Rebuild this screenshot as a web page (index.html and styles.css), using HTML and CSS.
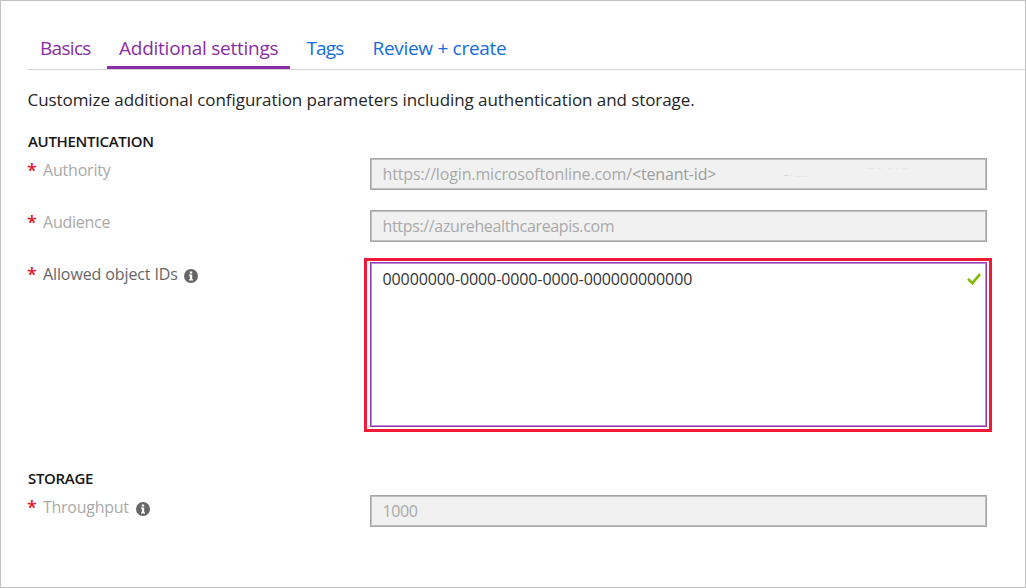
FILE: index.html
```html
<!DOCTYPE html>
<html lang="en">
<head>
<meta charset="utf-8">
<title>Additional settings</title>
<link rel="stylesheet" href="styles.css">
</head>
<body>
<main class="panel">
  <nav class="tabs">
    <a class="tab visited basics">Basics</a>
    <a class="tab visited active">Additional settings</a>
    <a class="tab tags">Tags</a>
    <a class="tab review">Review + create</a>
  </nav>
  <p class="intro">Customize additional configuration parameters including authentication and storage.</p>
  <section class="section">
    <h2 class="heading">AUTHENTICATION</h2>
    <div class="row">
      <label class="label authority"><b class="star">*</b><span>Authority</span></label>
      <div class="field"><span class="login">https://login.microsoftonline.com/</span><span class="tenant">&lt;tenant-id&gt;</span>
        <svg class="traces" viewBox="0 0 130 10"><path class="dash" d="M0 7.5h4"/><path d="M5 7.5h3M11 8.5h14M83 .5h7M93 .5h5M104 .5h4M112 .5h3M119 .5h5"/></svg></div>
    </div>
    <div class="row">
      <label class="label audience"><b class="star">*</b><span>Audience</span></label>
      <div class="field"><span class="url">https://azurehealthcareapis.com</span></div>
    </div>
    <div class="row tall">
      <label class="label allowed"><b class="star">*</b><span>Allowed object IDs</span>
        <svg class="info" viewBox="0 0 14 14"><circle cx="7" cy="7" r="7"/><path d="M5.8 2.5h2.4v2H5.8zM5 5.6h3.2v4.6H9v1.2H5v-1.2h.9V6.8H5z"/></svg>
      </label>
      <div class="highlight"><div class="area"><span class="ids">00000000-0000-0000-0000-000000000000</span>
        <svg class="check" viewBox="0 0 14 12"><path d="M1 5.9 5.4 10.2 13 1.2"/></svg></div></div>
    </div>
  </section>
  <section class="section storage-section">
    <h2 class="heading">STORAGE</h2>
    <div class="row">
      <label class="label throughput"><b class="star">*</b><span>Throughput</span>
        <svg class="info" viewBox="0 0 14 14"><circle cx="7" cy="7" r="7"/><path d="M5.8 2.5h2.4v2H5.8zM5 5.6h3.2v4.6H9v1.2H5v-1.2h.9V6.8H5z"/></svg>
      </label>
      <div class="field"><span class="amount">1000</span></div>
    </div>
  </section>
</main>
</body>
</html>
```
FILE: styles.css
```css
* { box-sizing: border-box; }
body { margin: 0; font-family: "Open Sans", "Noto Sans", sans-serif; }
.panel { width: 1026px; height: 588px; overflow: hidden; border: 1px solid #c0c0c0; background: #fff; padding: 28px 0 0 27px; }
.tabs { display: flex; height: 41px; border-bottom: 1px solid #d2d2d2; }
.tab { height: 40px; padding: 0 12px; font-size: 19px; line-height: 38px; color: #156cdc; white-space: nowrap; }
.visited { color: #892da5; }
.basics { width: 79px; letter-spacing: -0.7px; }
.active { width: 183px; border-bottom: 3px solid #892da5; letter-spacing: -0.25px; }
.tags { width: 70px; padding-left: 16.5px; letter-spacing: -0.85px; }
.review { padding-left: 12.5px; letter-spacing: -0.3px; }
.intro { margin: 18px 0 0 -0.5px; height: 24px; font-size: 17px; line-height: 24px; letter-spacing: -0.068px; color: #252525; white-space: nowrap; }
.heading { margin: 20px 0 0; height: 26px; font-size: 15px; font-weight: 600; line-height: 18px; letter-spacing: -0.31px; color: #161616; }
.row { display: grid; grid-template-columns: 342px 617px; height: 52px; }
.label { display: flex; height: 24px; font-size: 16px; line-height: 24px; color: #a9a9a9; white-space: nowrap; }
.star { width: 15px; margin-left: -1px; margin-right: 1px; color: #e81123; font-size: 18px; font-weight: 600; }
.authority { letter-spacing: -0.19px; }
.audience { letter-spacing: -0.24px; }
.allowed { letter-spacing: -0.11px; color: #666; }
.throughput { letter-spacing: -0.27px; }
.field { display: flex; height: 32px; border: 1px solid #a6a6a6; box-shadow: inset 0 0 0 1px #bfbfbf; background: #f1f1f1; padding-left: 11.5px; font-size: 16px; line-height: 30px; color: #a9a9a9; white-space: nowrap; }
.login { letter-spacing: -0.15px; }
.tenant { letter-spacing: -0.16px; color: #9c9c9c; }
.traces { width: 130px; height: 10px; margin: 9px 0 0 68px; fill: none; stroke: #e9e9e9; }
.dash { stroke: #d2d2d2; }
.url { letter-spacing: -0.34px; }
.amount { letter-spacing: -0.4px; }
.info { width: 14px; height: 14px; margin: 7px 0 0 6.5px; fill: #666; }
.throughput .info { margin-left: 7px; }
.info path { fill: #fff; }
.tall { height: 174px; }
.highlight { width: 628px; height: 174px; margin: -4px 0 0 -6px; padding: 1px 2px 2px 3px; border: 3px solid #f01937; }
.area { display: flex; justify-content: space-between; height: 165px; border: 1px solid #923ab0; box-shadow: inset 0 0 0 1px #bd8bcf; padding: 4px 5px 0 11.5px; font-size: 16px; line-height: 24px; color: #333; }
.ids { letter-spacing: -0.1px; }
.check { width: 14px; height: 12px; margin-top: 6px; fill: none; stroke: #7fba00; stroke-width: 2.6; }
.storage-section { margin-top: 33px; }
.storage-section .heading { margin-top: 0; }
```
